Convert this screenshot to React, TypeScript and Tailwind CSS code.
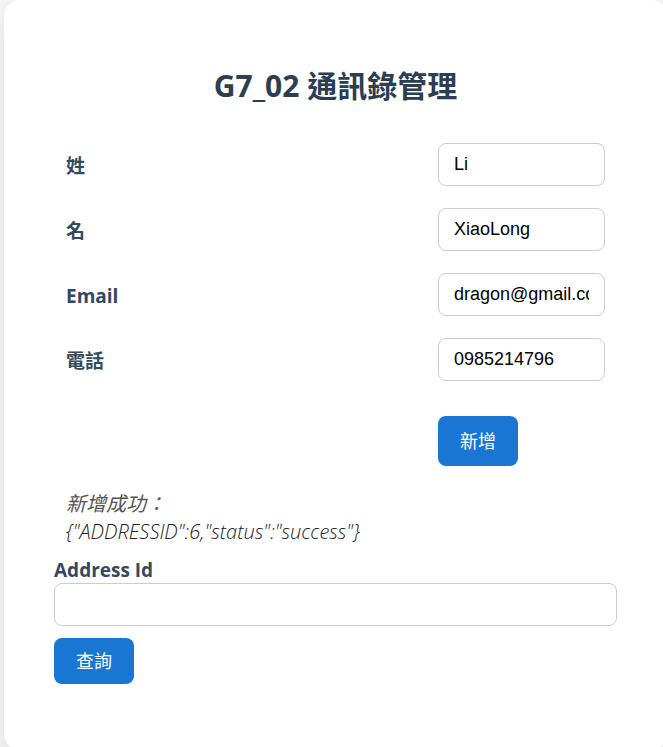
import { useState } from 'react';

const fields = [
  { id: 'lastName', label: '姓', type: 'text', value: 'Li' },
  { id: 'firstName', label: '名', type: 'text', value: 'XiaoLong' },
  { id: 'email', label: 'Email', type: 'text', value: 'dragon@gmail.com' },
  { id: 'phone', label: '電話', type: 'tel', value: '0985214796' },
];

const inputStyle =
  "block h-[43px] w-full rounded-lg border border-[#cccccc] bg-white px-[15px] font-['Liberation_Sans',Arial,sans-serif] text-[18px] text-black";
const buttonStyle = 'rounded-lg bg-[#1976d2] px-[22px] text-[18px] leading-6 text-white hover:bg-[#1565c0]';

export default function App() {
  const [addressId, setAddressId] = useState('');

  return (
    <div className="overflow-hidden bg-[#f4f6f8] font-['Open_Sans','Noto_Sans_CJK_TC',sans-serif]">
      <main className="-mr-1 ml-1 rounded-2xl bg-white px-[50px] pt-[66px] pb-[66px] shadow-[0_8px_24px_rgba(0,0,0,0.1)]">
        <h1 className="text-center text-[30px] leading-10 font-bold text-[#2c3e50]">G7_02 通訊錄管理</h1>

        <form className="mt-[37px] px-3" onSubmit={(event) => event.preventDefault()}>
          <div className="grid gap-[22px]">
            {fields.map((field) => (
              <div key={field.id} className="flex items-center justify-between">
                <label htmlFor={field.id} className="pt-[2px] text-[19px] leading-7 font-bold text-[#34495e]">
                  {field.label}
                </label>
                <div className="w-[167px]">
                  <input id={field.id} type={field.type} defaultValue={field.value} className={inputStyle} />
                </div>
              </div>
            ))}
          </div>
          <div className="mt-[35px] flex justify-end">
            <div className="w-[167px]">
              <button type="submit" className={`${buttonStyle} h-[50px]`}>
                新增
              </button>
            </div>
          </div>
          <output className="mt-6 block text-[20px] leading-7 text-[#555555] italic">
            新增成功：
            <br />
            <span className="font-light text-[#222222]">{'{"ADDRESSID":6,"status":"success"}'}</span>
          </output>
        </form>

        <form className="mt-3" onSubmit={(event) => event.preventDefault()}>
          <label htmlFor="addressId" className="block text-[19px] leading-[25px] font-bold text-[#34495e]">
            Address Id
          </label>
          <input
            id="addressId"
            type="text"
            value={addressId}
            onChange={(event) => setAddressId(event.target.value)}
            className={inputStyle}
          />
          <button type="submit" className={`${buttonStyle} mt-3 h-[46px]`}>
            查詢
          </button>
        </form>
      </main>
    </div>
  );
}
